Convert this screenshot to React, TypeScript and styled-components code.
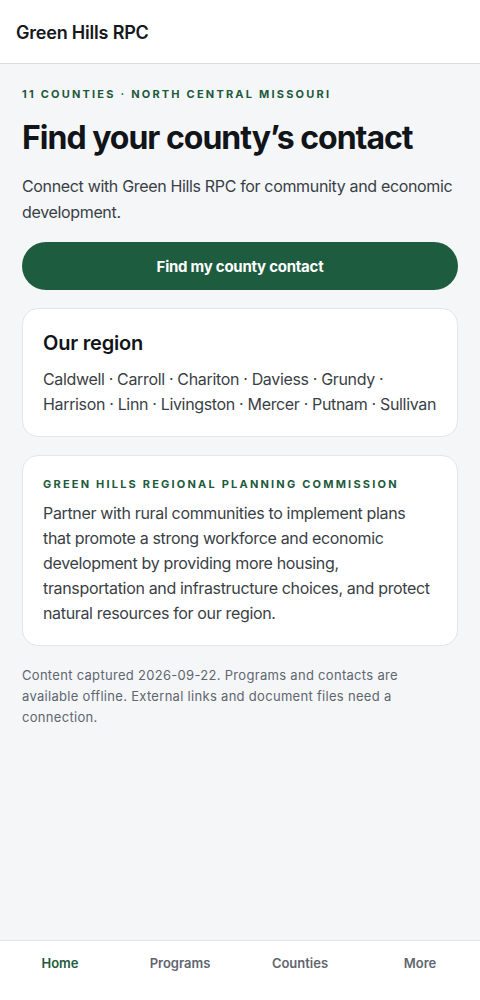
import React from "react";
import styled, { createGlobalStyle } from "styled-components";

const Global = createGlobalStyle`
  html, body { margin: 0; padding: 0; }
  body {
    background: #f4f6f8;
    font-family: Inter, "Noto Sans", sans-serif;
    color: #111418;
    -webkit-font-smoothing: antialiased;
  }
  * { box-sizing: border-box; }
`;

const Page = styled.div`
  min-height: 100vh;
  display: flex;
  flex-direction: column;
`;

const Header = styled.header`
  height: 64px;
  background: #ffffff;
  border-bottom: 1px solid #d9dce0;
  display: flex;
  align-items: center;
  padding: 2px 16px 0;
`;

const Brand = styled.h1`
  margin: 0;
  font-size: 18px;
  font-weight: 600;
  letter-spacing: -0.2px;
  color: #15181c;
`;

const Main = styled.main`
  flex: 1;
  padding: 22px 22px 24px;
  display: flex;
  flex-direction: column;
`;

const Eyebrow = styled.p<{ $gap?: number }>`
  margin: 0 0 ${(p) => p.$gap ?? 0}px;
  font-size: 11px;
  line-height: 16px;
  font-weight: 700;
  letter-spacing: 2.2px;
  text-transform: uppercase;
  color: #1e5a3c;
`;

const Title = styled.h2`
  margin: 16px 0 15px;
  font-size: 32px;
  line-height: 40px;
  font-weight: 700;
  letter-spacing: -1px;
  color: #111418;
`;

const Lead = styled.p`
  margin: 0 0 17px;
  font-size: 16px;
  line-height: 26px;
  letter-spacing: -0.34px;
  color: #3a3f46;
`;

const PrimaryButton = styled.button`
  height: 48px;
  border: none;
  border-radius: 24px;
  background: #1e5c3f;
  color: #ffffff;
  font-family: inherit;
  font-size: 15px;
  font-weight: 700;
  letter-spacing: -0.25px;
  margin-bottom: 18px;
  cursor: pointer;
`;

const Card = styled.section`
  background: #ffffff;
  border: 1px solid #e3e6ea;
  border-radius: 16px;
  padding: 20px 20px 19px;
  margin-bottom: 18px;
`;

const CardTitle = styled.h3`
  margin: 0 0 10px;
  font-size: 20px;
  line-height: 28px;
  font-weight: 600;
  letter-spacing: -0.2px;
  color: #111418;
`;

const CardText = styled.p`
  margin: 0;
  font-size: 16px;
  line-height: 25px;
  letter-spacing: -0.34px;
  color: #3a3f46;
`;

const Note = styled.p`
  margin: 1px 0 0;
  max-width: 412px;
  font-size: 13px;
  line-height: 21px;
  letter-spacing: 0.3px;
  color: #5f6670;
`;

const Nav = styled.nav`
  height: 60px;
  background: #ffffff;
  border-top: 1px solid #e3e6ea;
  display: grid;
  grid-template-columns: repeat(4, 1fr);
`;

const NavItem = styled.a<{ $active?: boolean }>`
  display: flex;
  justify-content: center;
  padding-top: 14px;
  font-size: 13px;
  line-height: 16px;
  font-weight: 600;
  text-decoration: none;
  color: ${(p) => (p.$active ? "#1e5a3c" : "#5f6670")};
`;

export default function App() {
  return (
    <Page>
      <Global />
      <Header>
        <Brand>Green Hills RPC</Brand>
      </Header>
      <Main>
        <Eyebrow>11 counties · North Central Missouri</Eyebrow>
        <Title>Find your county’s contact</Title>
        <Lead>Connect with Green Hills RPC for community and economic development.</Lead>
        <PrimaryButton>Find my county contact</PrimaryButton>
        <Card>
          <CardTitle>Our region</CardTitle>
          <CardText>
            Caldwell · Carroll · Chariton · Daviess · Grundy · Harrison · Linn · Livingston · Mercer · Putnam · Sullivan
          </CardText>
        </Card>
        <Card>
          <Eyebrow $gap={9}>Green Hills Regional Planning Commission</Eyebrow>
          <CardText>
            Partner with rural communities to implement plans that promote a strong workforce and economic
            development by providing more housing, transportation and infrastructure choices, and protect natural
            resources for our region.
          </CardText>
        </Card>
        <Note>
          Content captured 2026-09-22. Programs and contacts are available offline. External links and document files
          need a connection.
        </Note>
      </Main>
      <Nav>
        <NavItem $active href="#">Home</NavItem>
        <NavItem href="#">Programs</NavItem>
        <NavItem href="#">Counties</NavItem>
        <NavItem href="#">More</NavItem>
      </Nav>
    </Page>
  );
}
